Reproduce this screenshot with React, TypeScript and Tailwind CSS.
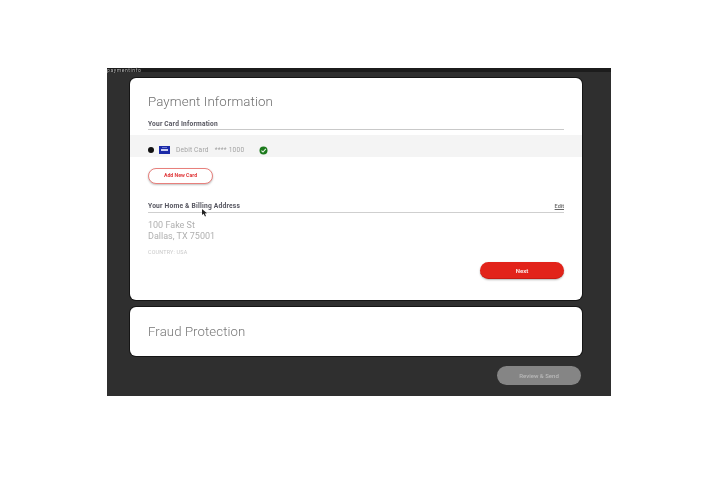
import React from 'react';

function CardBadge() {
  return (
    <svg width="11" height="8" viewBox="0 0 11 8" className="ml-[5px]">
      <rect width="11" height="8" fill="#1b2aa8" />
      <rect x="2" y="3" width="7" height="2" fill="#c9cdf0" />
      <rect x="3" y="1" width="5" height="1" fill="#6d76cf" />
    </svg>
  );
}

function VerifiedIcon() {
  return (
    <svg width="9" height="9" viewBox="0 0 9 9">
      <circle cx="4.5" cy="4.5" r="4" fill="#1c7a1c" />
      <path d="M2.4 4.6 L4 6 L6.8 2.8" fill="none" stroke="#e8f3e8" strokeWidth="1.1" />
    </svg>
  );
}

function Cursor() {
  return (
    <svg width="6" height="8" viewBox="0 0 6 8" className="absolute left-[72px] top-[131px]">
      <path d="M0 0 L0 6 L1.6 4.8 L3 7.5 L4 7 L2.8 4.4 L5 4.2 Z" fill="#222" />
    </svg>
  );
}

export default function App() {
  return (
    <div className="w-[720px] h-[480px] bg-white pt-[68px] pl-[107px] overflow-hidden font-['Roboto',sans-serif]">
      <div className="w-[504px] h-[328px] bg-[#2f2f2f] flex flex-col blur-[0.3px]">
        <div className="h-[4px] bg-[#1c1c1c] text-[5px] leading-[4px] tracking-[0.6px] text-[#b5b5b5] whitespace-nowrap">
          paymentinfo
        </div>

        <div className="relative ml-[23px] mt-[6px] w-[452px] h-[222px] bg-white rounded-[6px] shadow-[0_0_0_1px_#151515] flex flex-col">
          <h1 className="ml-[18px] mt-[15px] text-[13.3px] leading-[18px] font-light tracking-[0.1px] text-[#6f6f6f]">
            Payment Information
          </h1>

          <div className="mx-[18px] mt-[8px] border-b border-[#c9c9c9] h-[11px]">
            <span className="block text-[6.6px] leading-[10px] font-bold tracking-[0.2px] text-[#55555f]">
              Your Card Information
            </span>
          </div>

          <div className="mt-[5px] h-[22px] bg-[#f4f4f4] flex items-center pt-[8px] pl-[18px]">
            <span className="w-[6px] h-[6px] rounded-full bg-[#111]" />
            <CardBadge />
            <span className="ml-[6px] mt-[1px] text-[6.6px] text-[#a3a3a3] tracking-[0.2px]">Debit Card</span>
            <span className="ml-[6px] mt-[1px] text-[6.6px] text-[#a3a3a3] tracking-[0.2px]">**** 1000</span>
            <span className="ml-[15px] flex">
              <VerifiedIcon />
            </span>
          </div>

          <button className="ml-[18px] mt-[11px] w-[65px] h-[16px] rounded-full border border-[#e8807c] bg-white shadow-[0_1px_2px_rgba(0,0,0,0.25)] text-[5.2px] font-bold text-[#e0383a]">
            Add New Card
          </button>

          <div className="mx-[18px] mt-[17px] h-[12px] border-b border-[#cfcfcf] flex justify-between items-start">
            <span className="text-[6.7px] leading-[10px] font-bold tracking-[0.2px] text-[#55555f]">
              Your Home &amp; Billing Address
            </span>
            <span className="mt-[1px] text-[5.5px] leading-[9px] font-medium text-[#666] underline">Edit</span>
          </div>

          <Cursor />

          <div className="ml-[18px] mt-[7px] text-[9px] leading-[11px] text-[#b0b0b0]">
            <div>100 Fake St</div>
            <div>Dallas, TX 75001</div>
          </div>

          <div className="ml-[18px] mt-[7px] text-[5.4px] leading-[7px] text-[#c9c9c9] tracking-[0.2px]">
            COUNTRY: USA
          </div>

          <div className="flex justify-end mr-[18px] mt-[6px]">
            <button className="w-[84px] h-[17px] rounded-full bg-[#e2231a] border-b border-[#c71a12] shadow-[0_1px_2px_rgba(0,0,0,0.3)] text-[6px] font-bold text-[#fbe5e3]">
              Next
            </button>
          </div>
        </div>

        <div className="ml-[23px] mt-[7px] w-[452px] h-[49px] bg-white rounded-[6px] shadow-[0_0_0_1px_#151515] flex items-center pl-[18px]">
          <span className="text-[13.2px] font-light tracking-[0.1px] text-[#777]">Fraud Protection</span>
        </div>

        <div className="flex justify-end mr-[30px] mt-[10px]">
          <button className="w-[84px] h-[19px] rounded-full bg-[#858585] text-[6px] font-medium text-[#b9b9b9]">
            Review &amp; Send
          </button>
        </div>
      </div>
    </div>
  );
}
